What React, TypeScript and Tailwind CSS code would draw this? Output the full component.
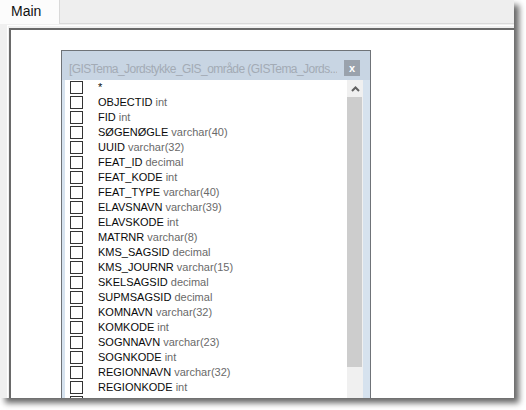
const FONT = { fontFamily: '"Liberation Sans", Arial, sans-serif' };

// columns shown in the field picker
const columns: [string, string][] = [
  ['*', ''],
  ['OBJECTID', 'int'],
  ['FID', 'int'],
  ['SØGENØGLE', 'varchar(40)'],
  ['UUID', 'varchar(32)'],
  ['FEAT_ID', 'decimal'],
  ['FEAT_KODE', 'int'],
  ['FEAT_TYPE', 'varchar(40)'],
  ['ELAVSNAVN', 'varchar(39)'],
  ['ELAVSKODE', 'int'],
  ['MATRNR', 'varchar(8)'],
  ['KMS_SAGSID', 'decimal'],
  ['KMS_JOURNR', 'varchar(15)'],
  ['SKELSAGSID', 'decimal'],
  ['SUPMSAGSID', 'decimal'],
  ['KOMNAVN', 'varchar(32)'],
  ['KOMKODE', 'int'],
  ['SOGNNAVN', 'varchar(23)'],
  ['SOGNKODE', 'int'],
  ['REGIONNAVN', 'varchar(32)'],
  ['REGIONKODE', 'int'],
];

function ColumnRow({ name, type }: { name?: string; type?: string }) {
  return (
    <div className="h-[15px] flex items-center shrink-0">
      <div className="ml-[5px] w-[13px] h-[13px] border border-[#333333] bg-white shrink-0" />
      {name && (
        <div className="ml-[15px] text-[11px] leading-[13px] whitespace-nowrap">
          <span className="text-[#0a0a0a]">{name}</span>
          {type && <span className="text-[#6a6a6a]"> {type}</span>}
        </div>
      )}
    </div>
  );
}

function TableWindow() {
  return (
    <div className="absolute left-[50px] top-[20px] w-[310px] h-[420px] border border-[#6f7378] bg-[#d6e2ee] flex flex-col">
      {/* title bar */}
      <div className="h-[29px] bg-[#c8d5e3] flex items-start shrink-0">
        <div className="pl-[7px] pt-[10px] text-[12px] leading-[16px] tracking-[-0.55px] text-[#a3abb5] whitespace-nowrap overflow-hidden w-[275px]">
          [GISTema_Jordstykke_GIS_område (GISTema_Jords...
        </div>
        <div className="ml-auto mr-[10px] mt-[9px] w-[16px] h-[16px] bg-[#9aa2ac] flex items-center justify-center text-white text-[11px] font-bold leading-none">
          x
        </div>
      </div>

      {/* body */}
      <div className="flex flex-1 min-h-0">
        <div className="w-[3px] shrink-0" />
        <div className="w-[282px] bg-white flex flex-col overflow-hidden shrink-0">
          {columns.map(([n, t]) => (
            <ColumnRow key={n} name={n} type={t} />
          ))}
          {/* next row, only its checkbox top shows above the window edge */}
          <ColumnRow />
        </div>
        <div className="w-[16px] bg-[#f0f0f0] flex flex-col shrink-0">
          <div className="h-[17px] flex items-center justify-center">
            <svg width="9" height="6" viewBox="0 0 9 6">
              <polyline points="1,5 4.5,1.5 8,5" fill="none" stroke="#606060" strokeWidth="2" />
            </svg>
          </div>
          <div className="w-[15px] h-[270px] bg-[#cdcdcd]" />
        </div>
      </div>
    </div>
  );
}

export default function App() {
  return (
    <div className="w-[526px] h-[410px] bg-white" style={FONT}>
      <div className="w-[514px] h-[398px] bg-[#f0f0f0] flex flex-col overflow-hidden shadow-[5px_5px_6px_rgba(0,0,0,0.6)]">
        {/* tab strip */}
        <div className="h-[24px] bg-[#eeeeee] border-b border-[#dadada] flex shrink-0">
          <div className="w-[60px] h-[24px] bg-[#fcfcfc] border-r border-[#d9d9d9] pl-[11px] pt-[3px] text-[14px] leading-[17px] text-[#111]">
            Main
          </div>
        </div>

        {/* content panel */}
        <div className="flex-1 flex pl-[7px] pt-[1px] min-h-0">
          <div className="flex-1 flex border-l border-t border-white pl-[1px] pt-[2px] min-h-0">
            <div className="flex-1 relative overflow-hidden bg-white border-l-2 border-t-2 border-[#6a6a6a]">
              <TableWindow />
            </div>
          </div>
        </div>
      </div>
    </div>
  );
}
